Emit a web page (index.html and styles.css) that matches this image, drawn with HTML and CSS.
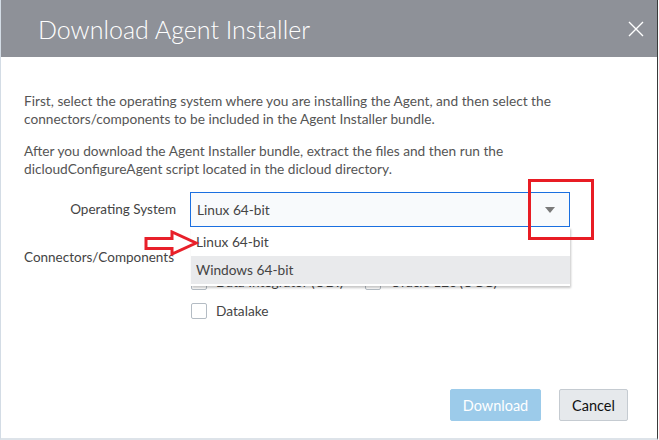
FILE: index.html
```html
<!DOCTYPE html>
<html>
<head>
<meta charset="utf-8">
<link rel="stylesheet" href="styles.css">
</head>
<body>
<div class="dialog">
  <div class="header">
    <h1 class="title">Download Agent Installer</h1>
    <button class="close" aria-label="Close">
      <svg width="16" height="16" viewBox="0 0 16 16"><path d="M1 1 L15 15 M15 1 L1 15" stroke="#fff" stroke-width="1.4" fill="none"/></svg>
    </button>
  </div>
  <div class="body">
    <p class="para">First, select the operating system where you are installing the Agent, and then select the connectors/components to be included in the Agent Installer bundle.</p>
    <p class="para">After you download the Agent Installer bundle, extract the files and then run the dicloudConfigureAgent script located in the dicloud directory.</p>
    <div class="form">
      <div class="row os-row">
        <label class="lbl lbl-right">Operating System</label>
        <div class="select-wrap">
          <div class="select">
            <span class="sel-text">Linux 64-bit</span>
            <span class="caret"></span>
          </div>
          <ul class="menu">
            <li class="opt">Linux 64-bit</li>
            <li class="opt hover">Windows 64-bit</li>
          </ul>
        </div>
      </div>
      <div class="row comp-row">
        <label class="lbl">Connectors/Components</label>
        <div class="checks">
          <div class="check-line">
            <span class="check"><span class="box"></span>Data Integrator (ODI)</span>
            <span class="check"><span class="box"></span>Oracle 12c (OGG)</span>
          </div>
          <div class="check-line">
            <span class="check"><span class="box"></span>Datalake</span>
          </div>
        </div>
      </div>
    </div>
  </div>
  <div class="footer">
    <button class="btn btn-primary">Download</button>
    <button class="btn btn-default">Cancel</button>
  </div>
  <div class="annot-box"></div>
  <svg class="annot-arrow" width="60" height="30" viewBox="0 0 60 30">
    <polygon points="2,8.5 28,8.5 28,2 52,13 28,24 28,18.5 2,18.5" fill="none" stroke="#e8202a" stroke-width="3" stroke-linejoin="miter"/>
  </svg>
</div>
</body>
</html>
```
FILE: styles.css
```css
* { box-sizing: border-box; }
html, body { margin: 0; padding: 0; }
body {
  width: 659px;
  height: 440px;
  background: #fff;
  font-family: Lato, "Open Sans", sans-serif;
  overflow: hidden;
}
.dialog {
  position: relative;
  width: 658px;
  height: 440px;
  border-left: 1px solid #d3dce5;
  border-right: 1px solid #3a3a3a;
  border-bottom: 2px solid #dde3e9;
  display: flex;
  flex-direction: column;
}
.header {
  height: 57px;
  background: #8e9198;
  display: flex;
  align-items: center;
  justify-content: space-between;
  padding: 0 13px 0 37px;
  flex: none;
}
.title {
  margin: 0;
  font-weight: 300;
  font-size: 25px;
  color: #fff;
  letter-spacing: 0;
}
.close {
  background: none;
  border: 0;
  padding: 0;
  width: 16px;
  height: 16px;
  display: flex;
}
.body {
  padding: 35px 24px 0 23px;
  flex: 1;
}
.para {
  margin: 0 0 14px;
  max-width: 545px;
  font-size: 13.7px;
  line-height: 18px;
  color: #555;
}
.form { margin-top: 6px; }
.row { display: flex; }
.lbl {
  width: 153px;
  font-size: 13.5px;
  color: #444;
  flex: none;
}
.lbl-right {
  text-align: right;
  padding-right: 1px;
  line-height: 35px;
}
.select-wrap {
  position: relative;
  margin-left: 13px;
  width: 380px;
}
.select {
  height: 35px;
  border: 1px solid #1a6fe0;
  background: #f8fafc;
  display: flex;
  align-items: center;
  justify-content: space-between;
  padding: 0 14px 0 6px;
}
.sel-text { font-size: 13.7px; color: #444; }
.caret {
  width: 0; height: 0;
  border-left: 5px solid transparent;
  border-right: 5px solid transparent;
  border-top: 6px solid #7a7a7a;
}
.menu {
  position: absolute;
  left: 1px;
  top: 35px;
  width: 379px;
  margin: 0;
  padding: 0 0 2px;
  list-style: none;
  background: #fff;
  box-shadow: 1px 2px 2px rgba(0,0,0,0.22);
  z-index: 5;
}
.opt {
  height: 29px;
  line-height: 30px;
  padding-left: 5px;
  font-size: 13.7px;
  color: #444;
}
.opt.hover { background: #e9eaec; height: 28px; line-height: 28px; }
.comp-row { margin-top: 21px; }
.comp-row .lbl { line-height: 19px; }
.checks {
  margin-left: 14px;
  padding-top: 26px;
  display: flex;
  flex-direction: column;
  gap: 13px;
}
.check-line { display: flex; gap: 22px; }
.check {
  display: flex;
  align-items: center;
  gap: 9px;
  font-size: 13.7px;
  color: #444;
  line-height: 16px;
}
.box {
  width: 16px;
  height: 16px;
  border: 1px solid #b4bcc4;
  border-radius: 2px;
  background: #fff;
}
.footer {
  display: flex;
  justify-content: flex-end;
  gap: 18px;
  padding: 0 29px 17px 0;
  flex: none;
}
.btn {
  height: 32px;
  font-family: Lato, "Open Sans", sans-serif;
  font-size: 14.5px;
  border-radius: 2px;
  padding: 0;
}
.btn-primary {
  width: 91px;
  background: #9ccbea;
  border: 1px solid #9ccbea;
  color: #fff;
}
.btn-default {
  width: 69px;
  background: #e6e9ec;
  border: 1px solid #c5cbd1;
  color: #111;
}
.annot-box {
  position: absolute;
  left: 527px;
  top: 179px;
  width: 66px;
  height: 61px;
  border: 3px solid #e81c24;
  z-index: 6;
}
.annot-arrow {
  position: absolute;
  left: 143px;
  top: 230px;
  z-index: 6;
}
```
